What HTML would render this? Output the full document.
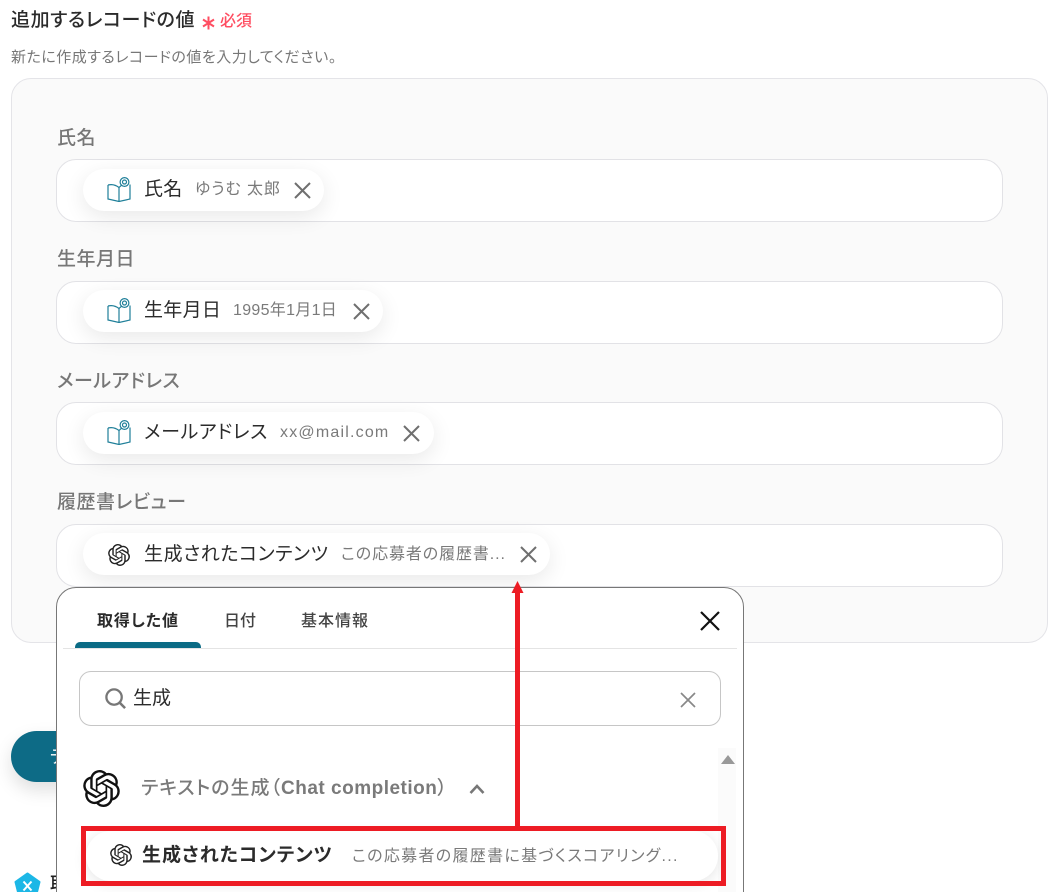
<!DOCTYPE html>
<html lang="ja"><head><meta charset="utf-8"><style>
html,body{margin:0;padding:0;background:#fff;width:1056px;height:892px;overflow:hidden}
body{position:relative;font-family:"Liberation Sans","Noto Sans CJK JP",sans-serif;color:#2b2b2b;font-feature-settings:"palt"}
#w{position:absolute;left:0;top:0;width:1056px;height:892px;overflow:hidden}
.a{position:absolute;white-space:nowrap}
.panel{left:11px;top:78px;width:1035px;height:563px;background:#fafafa;border:1px solid #e4e4e8;border-radius:20px}
.label{left:57px;font-size:19px;letter-spacing:.5px;font-weight:500;color:#777;line-height:26px}
.input{left:56px;width:945px;height:61px;background:#fff;border:1px solid #e2e2e6;border-radius:20px}
.chip{left:83px;height:42px;background:#fff;border-radius:21px;box-shadow:0 6px 22px rgba(0,0,0,.09)}
.ct{font-size:19px;letter-spacing:.6px;line-height:26px;color:#2b2b2b}
.cv{font-size:16px;letter-spacing:.9px;line-height:24px;color:#7a7a7a}
</style></head><body><div id="w">
<svg width="0" height="0" style="position:absolute"><defs>
<path id="oa" d="M22.2819 9.8211a5.9847 5.9847 0 0 0-.5157-4.9108 6.0462 6.0462 0 0 0-6.5098-2.9A6.0651 6.0651 0 0 0 4.9807 4.1818a5.9847 5.9847 0 0 0-3.9977 2.9 6.0462 6.0462 0 0 0 .7427 7.0966 5.98 5.98 0 0 0 .511 4.9107 6.051 6.051 0 0 0 6.5146 2.9001A5.9847 5.9847 0 0 0 13.2599 24a6.0557 6.0557 0 0 0 5.7718-4.2058 5.9894 5.9894 0 0 0 3.9977-2.9001 6.0557 6.0557 0 0 0-.7475-7.0729zm-9.022 12.6081a4.4755 4.4755 0 0 1-2.8764-1.0408l.1419-.0804 4.7783-2.7582a.7948.7948 0 0 0 .3927-.6813v-6.7369l2.02 1.1686a.071.071 0 0 1 .038.052v5.5826a4.504 4.504 0 0 1-4.4945 4.4944zm-9.6607-4.1254a4.4708 4.4708 0 0 1-.5346-3.0137l.142.0852 4.783 2.7582a.7712.7712 0 0 0 .7806 0l5.8428-3.3685v2.3324a.0804.0804 0 0 1-.0332.0615L9.74 19.9502a4.4992 4.4992 0 0 1-6.1408-1.6464zM2.3408 7.8956a4.485 4.485 0 0 1 2.3655-1.9728V11.6a.7664.7664 0 0 0 .3879.6765l5.8144 3.3543-2.0201 1.1685a.0757.0757 0 0 1-.071 0l-4.8303-2.7865A4.504 4.504 0 0 1 2.3408 7.872zm16.5963 3.8558L13.1038 8.364 15.1192 7.2a.0757.0757 0 0 1 .071 0l4.8303 2.7913a4.4944 4.4944 0 0 1-.6765 8.1042v-5.6772a.79.79 0 0 0-.407-.667zm2.0107-3.0231l-.142-.0852-4.7735-2.7818a.7759.7759 0 0 0-.7854 0L9.409 9.2297V6.8974a.0662.0662 0 0 1 .0284-.0615l4.8303-2.7866a4.4992 4.4992 0 0 1 6.6802 4.66zM8.3065 12.863l-2.02-1.1638a.0804.0804 0 0 1-.038-.0567V6.0742a4.4992 4.4992 0 0 1 7.3757-3.4537l-.142.0805L8.704 5.459a.7948.7948 0 0 0-.3927.6813zm1.0976-2.3654l2.602-1.4998 2.6069 1.4998v2.9994l-2.5974 1.4997-2.6067-1.4997Z"/>
<g id="bk" fill="none" stroke="#1f7f99" stroke-width="1.2"><path d="M1 8V22L12 24.5 23 22V7.5"/><path d="M12 10.5V24.5"/><path d="M1 8Q7 6.5 12 10.5Q13.5 9 15 8"/><circle cx="17.5" cy="5" r="4.4"/><circle cx="17.5" cy="5" r="2"/></g>
<path id="x" d="M1 1 16 16M16 1 1 16" fill="none" stroke="#6f6f6f" stroke-width="2"/>
</defs></svg>

<div class="a" style="left:11px;top:7px;font-size:19px;letter-spacing:.6px;line-height:28px;color:#2b2b2b;font-weight:500">追加するレコードの値</div>
<svg class="a" style="left:202px;top:16px" width="13" height="14" viewBox="0 0 13 14"><path d="M6.5 0.5V13.5M1 3.5 12 10.5M12 3.5 1 10.5" stroke="#ff4d61" stroke-width="2" fill="none"/></svg>
<div class="a" style="left:220px;top:10px;font-size:16px;line-height:24px;color:#ff4d61;font-weight:500">必須</div>
<div class="a" style="left:11px;top:47px;font-size:15px;letter-spacing:.5px;line-height:22px;color:#777">新たに作成するレコードの値を入力してください。</div>

<div class="a panel"></div>

<div class="a label" style="top:126px">氏名</div>
<div class="a input" style="top:159px"></div>
<div class="a chip" style="top:169px;width:241px"></div>
<svg class="a" style="left:107px;top:177px" width="24" height="25" viewBox="0 0 24 25"><use href="#bk"/></svg>
<div class="a ct" style="left:144px;top:177px;letter-spacing:.2px">氏名</div>
<div class="a cv" style="left:195px;top:178px">ゆうむ 太郎</div>
<svg class="a" style="left:294px;top:182px" width="17" height="17"><use href="#x"/></svg>

<div class="a label" style="top:247px">生年月日</div>
<div class="a input" style="top:281px"></div>
<div class="a chip" style="top:290px;width:300px"></div>
<svg class="a" style="left:107px;top:298px" width="24" height="25" viewBox="0 0 24 25"><use href="#bk"/></svg>
<div class="a ct" style="left:144px;top:298px;letter-spacing:.3px">生年月日</div>
<div class="a cv" style="left:233px;top:299px;letter-spacing:.3px">1995年1月1日</div>
<svg class="a" style="left:353px;top:303px" width="17" height="17"><use href="#x"/></svg>

<div class="a label" style="top:369px">メールアドレス</div>
<div class="a input" style="top:402px"></div>
<div class="a chip" style="top:412px;width:351px"></div>
<svg class="a" style="left:107px;top:420px" width="24" height="25" viewBox="0 0 24 25"><use href="#bk"/></svg>
<div class="a ct" style="left:144px;top:420px">メールアドレス</div>
<div class="a cv" style="left:280px;top:421px;letter-spacing:1.2px">xx@mail.com</div>
<svg class="a" style="left:403px;top:425px" width="17" height="17"><use href="#x"/></svg>

<div class="a label" style="top:490px">履歴書レビュー</div>
<div class="a input" style="top:524px"></div>
<div class="a chip" style="top:533px;width:467px"></div>
<svg class="a" style="left:108px;top:544px" width="22" height="22" viewBox="0 0 24 24"><use href="#oa" fill="#222"/></svg>
<div class="a ct" style="left:144px;top:542px">生成されたコンテンツ</div>
<div class="a cv" style="left:341px;top:543px">この応募者の履歴書...</div>
<svg class="a" style="left:520px;top:546px" width="17" height="17"><use href="#x"/></svg>

<div class="a" style="left:11px;top:731px;width:120px;height:51px;background:#0d6b86;border-radius:26px;box-shadow:0 8px 18px rgba(0,0,0,.13)"></div>
<div class="a" style="left:50px;top:744px;font-size:18px;color:#fff;line-height:26px">テ</div>

<svg class="a" style="left:14px;top:872px" width="27" height="20" viewBox="0 0 27 20"><path d="M13.5 1.5 25.5 10 22 24H5L1.5 10Z" fill="#1cb7e6" stroke="#1cb7e6" stroke-width="2" stroke-linejoin="round"/><path d="M9.5 9.5 13.5 14 9.5 18.5M17.5 9.5 13.5 14 17.5 18.5" stroke="#fff" stroke-width="2" fill="none"/></svg>
<div class="a" style="left:50px;top:871px;font-size:18px;line-height:26px;font-weight:500;color:#222">取</div>

<div class="a" style="left:56px;top:587px;width:686px;height:340px;background:#fff;border:1px solid #777;border-radius:20px"></div>
<div class="a" style="left:97px;top:610px;font-size:16px;font-weight:700;letter-spacing:.9px;line-height:24px;color:#2b2b2b">取得した値</div>
<div class="a" style="left:224px;top:610px;font-size:16px;font-weight:500;letter-spacing:0;line-height:24px;color:#444">日付</div>
<div class="a" style="left:301px;top:610px;font-size:16px;font-weight:500;letter-spacing:1px;line-height:24px;color:#444">基本情報</div>
<div class="a" style="left:63px;top:648px;width:674px;height:1px;background:#e4e4e4"></div>
<div class="a" style="left:75px;top:642px;width:126px;height:6px;background:#0b6b85;border-radius:5px 5px 0 0"></div>
<svg class="a" style="left:700px;top:611px" width="20" height="20"><path d="M1 1 19 19M19 1 1 19" stroke="#111" stroke-width="2.2" fill="none"/></svg>

<div class="a" style="left:79px;top:671px;width:640px;height:53px;border:1px solid #c6c6c6;border-radius:12px;background:#fff"></div>
<svg class="a" style="left:104px;top:687px" width="23" height="23" viewBox="0 0 24 24"><circle cx="10.5" cy="10.5" r="8" fill="none" stroke="#777" stroke-width="2.4"/><path d="M16.5 16.5 22 22" stroke="#777" stroke-width="2.6"/></svg>
<div class="a" style="left:133px;top:686px;font-size:19px;line-height:26px;color:#2b2b2b">生成</div>
<svg class="a" style="left:680px;top:692px" width="16" height="16"><path d="M1 1 15 15M15 1 1 15" stroke="#888" stroke-width="1.7" fill="none"/></svg>

<div class="a" style="left:718px;top:748px;width:18px;height:144px;background:#fbfbfb"></div>
<svg class="a" style="left:720px;top:755px" width="16" height="10"><path d="M8 0 15 9H1Z" fill="#999"/></svg>

<svg class="a" style="left:83px;top:770px" width="37" height="37" viewBox="0 0 24 24"><use href="#oa" fill="#111"/></svg>
<div class="a" style="left:141px;top:776px;font-size:19px;font-weight:500;line-height:26px;color:#7a7a7a;letter-spacing:1px">テキストの生成（<span style="font-weight:700;letter-spacing:.5px">Chat completion</span>）</div>
<svg class="a" style="left:469px;top:783px" width="16" height="12"><path d="M1.5 10 8 3 14.5 10" fill="none" stroke="#777" stroke-width="2.6"/></svg>

<div class="a" style="left:86px;top:831px;width:632px;height:50px;background:#fff;border-radius:25px;box-shadow:0 3px 14px rgba(0,0,0,.1)"></div>
<svg class="a" style="left:110px;top:844px" width="22" height="22" viewBox="0 0 24 24"><use href="#oa" fill="#222"/></svg>
<div class="a" style="left:142px;top:843px;font-size:19px;font-weight:700;letter-spacing:1px;line-height:26px;color:#2b2b2b">生成されたコンテンツ</div>
<div class="a cv" style="left:352px;top:845px;letter-spacing:1.3px">この応募者の履歴書に基づくスコアリング...</div>

<div class="a" style="left:81px;top:826px;width:635px;height:50px;border:5px solid #ed1c24"></div>
<div class="a" style="left:515px;top:590px;width:5px;height:237px;background:#ed1c24"></div>
<svg class="a" style="left:511px;top:581px" width="13" height="12"><path d="M6.5 0 12.5 12H.5Z" fill="#ed1c24"/></svg>
</div></body></html>
